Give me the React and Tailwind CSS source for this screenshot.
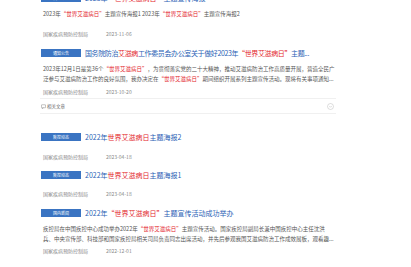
import React from "react";

const FONT = { fontFamily: '"Noto Sans CJK SC", "Noto Sans", sans-serif' };

function Badge({ children }) {
  return (
    <div className="w-[40px] h-[8px] bg-[#3a74c2] text-white text-[4px] leading-[8px] flex items-center justify-center shrink-0">
      {children}
    </div>
  );
}

function R({ children }) {
  return <span className="text-[#e3262c]">{children}</span>;
}

function Title({ badge, children, tight }) {
  return (
    <div className="h-[12px] flex items-center gap-[4px]">
      <Badge>{badge}</Badge>
      <div
        className={
          tight
            ? "text-[7px] leading-[12px] text-[#2a5fb5] whitespace-nowrap tracking-[-0.38px]"
            : "text-[7px] leading-[12px] text-[#2a5fb5] whitespace-nowrap"
        }
      >
        {children}
      </div>
    </div>
  );
}

function Summary({ lines }) {
  return (
    <div className="mt-[5px] h-[20px] pl-[2px] text-[5.5px] leading-[10px] text-[#555555]">
      {lines.map((l, i) => (
        <div key={i} className="whitespace-nowrap">{l}</div>
      ))}
    </div>
  );
}

function Meta({ date, className }) {
  return (
    <div className={"h-[10px] pl-[2px] flex items-center text-[5px] text-[#8a8a8a] " + className}>
      <span className="w-[63px]">国家疾病预防控制局</span>
      <span>{date}</span>
    </div>
  );
}

export default function App() {
  return (
    <div className="w-[411px] h-[267px] overflow-hidden bg-white" style={FONT}>
      <div className="ml-[41px] w-[295px] mt-[-8px]">
        {/* item 1 */}
        <div>
          <Title badge="疾控动态">
            2023年<R>“世界艾滋病日”</R>主题宣传海报
          </Title>
          <Summary
            lines={[
              <>2023年<R>“世界艾滋病日”</R>主题宣传海报1 2023年<R>“世界艾滋病日”</R>主题宣传海报2</>,
            ]}
          />
          <Meta date="2023-11-06" className="mt-0" />
        </div>

        {/* item 2 */}
        <div className="mt-[8px]">
          <Title badge="通知公告" tight>
            国务院防治<R>艾滋病</R>工作委员会办公室关于做好2023年<R>“世界艾滋病日”</R>主题...
          </Title>
          <Summary
            lines={[
              <>2023年12月1日是第36个<R>“世界艾滋病日”</R>，为贯彻落实党的二十大精神，推动艾滋病防治工作高质量开展，营造全民广</>,
              <>泛参与艾滋病防治工作的良好氛围，我办决定在<R>“世界艾滋病日”</R>期间组织开展系列主题宣传活动。现将有关事项通知...</>,
            ]}
          />
          <Meta date="2023-10-20" className="mt-[3px]" />
          <div className="mt-[1px] ml-[-1px] h-[16px] border-t border-b border-[#f0f0f0] flex items-center justify-between pl-[1px] pr-[2px]">
            <div className="flex items-center gap-[1px] text-[4.5px] text-[#666666]">
              <svg width="5" height="5" viewBox="0 0 10 10" fill="none" stroke="#888" strokeWidth="1">
                <rect x="1" y="1.5" width="8" height="6" rx="0.5" />
                <path d="M3 7.5 L2.5 9.5 L5 7.5" />
              </svg>
              <span>相关文章</span>
            </div>
            <svg width="7" height="7" viewBox="0 0 14 14" fill="none" stroke="#bbbbbb" strokeWidth="1">
              <circle cx="7" cy="7" r="6" />
              <path d="M4.5 6 L7 8.5 L9.5 6" />
            </svg>
          </div>
        </div>

        {/* item 3 */}
        <div className="mt-[17px]">
          <Title badge="疾控动态">
            2022年<R>世界艾滋病日</R>主题海报2
          </Title>
          <Meta date="2023-04-18" className="mt-[9px]" />
        </div>

        {/* item 4 */}
        <div className="mt-[7px]">
          <Title badge="疾控动态">
            2022年<R>世界艾滋病日</R>主题海报1
          </Title>
          <Meta date="2023-04-18" className="mt-[8px]" />
        </div>

        {/* item 5 */}
        <div className="mt-[8px]">
          <Title badge="国内新闻">
            2022年<R>“世界艾滋病日”</R>主题宣传活动成功举办
          </Title>
          <Summary
            lines={[
              <>疾控局在中国疾控中心成功举办2022年<R>“世界艾滋病日”</R>主题宣传活动。国家疾控局副局长兼中国疾控中心主任沈洪</>,
              <>兵、中央宣传部、科技部和国家疾控局相关司局负责同志出席活动，并先后参观我国艾滋病防治工作成效展板，观看趣...</>,
            ]}
          />
          <Meta date="2022-12-01" className="mt-[2px]" />
        </div>
      </div>
    </div>
  );
}
